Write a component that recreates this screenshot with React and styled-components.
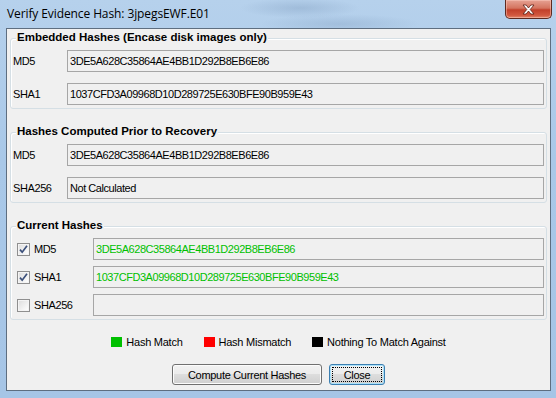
import React from 'react';
import styled, { createGlobalStyle } from 'styled-components';

const GlobalStyle = createGlobalStyle`
  html, body {
    margin: 0;
    padding: 0;
    background: #aecbe8;
  }
  body {
    font-family: "Liberation Sans", Arial, sans-serif;
  }
`;

const GREEN = '#00c000';

const embedded = [
  { label: 'MD5', value: '3DE5A628C35864AE4BB1D292B8EB6E86' },
  { label: 'SHA1', value: '1037CFD3A09968D10D289725E630BFE90B959E43' },
];

const prior = [
  { label: 'MD5', value: '3DE5A628C35864AE4BB1D292B8EB6E86' },
  { label: 'SHA256', value: 'Not Calculated' },
];

const current = [
  { label: 'MD5', value: '3DE5A628C35864AE4BB1D292B8EB6E86', checked: true },
  { label: 'SHA1', value: '1037CFD3A09968D10D289725E630BFE90B959E43', checked: true },
  { label: 'SHA256', value: '', checked: false },
];

const legend = [
  { color: GREEN, text: 'Hash Match' },
  { color: '#ff0000', text: 'Hash Mismatch' },
  { color: '#000000', text: 'Nothing To Match Against' },
];

const CloseGlyph = () => (
  <svg width="13" height="11" viewBox="0 0 13 11">
    <path
      d="M1 1h3.2L6.5 4 8.8 1H12L8.2 5.5 12 10H8.8L6.5 7 4.2 10H1l3.8-4.5z"
      fill="#fff"
      stroke="#5b1d12"
      strokeWidth="0.8"
      strokeLinejoin="round"
    />
  </svg>
);

const CheckBox = ({ checked }) => (
  <Box>
    {checked && (
      <svg width="9" height="9" viewBox="0 0 9 9">
        <path d="M1 4.6l2.2 2.6L8 0.8" fill="none" stroke="#3b4f7a" strokeWidth="1.7" />
      </svg>
    )}
  </Box>
);

const App = () => (
  <>
    <GlobalStyle />
    <Window>
      <TitleBar>
        <Title>Verify Evidence Hash: 3jpegsEWF.E01</Title>
        <CaptionClose>
          <CloseGlyph />
        </CaptionClose>
      </TitleBar>

      <Client>
        <Group $gap={11}>
          <Legend>Embedded Hashes (Encase disk images only)</Legend>
          {embedded.map((h) => (
            <Row key={h.label} $labelWidth={54}>
              <Label>{h.label}</Label>
              <TextBox>{h.value}</TextBox>
            </Row>
          ))}
        </Group>

        <Group $gap={11}>
          <Legend>Hashes Computed Prior to Recovery</Legend>
          {prior.map((h) => (
            <Row key={h.label} $labelWidth={54}>
              <Label>{h.label}</Label>
              <TextBox>{h.value}</TextBox>
            </Row>
          ))}
        </Group>

        <Group $gap={6}>
          <Legend>Current Hashes</Legend>
          {current.map((h) => (
            <Row key={h.label} $labelWidth={80}>
              <CheckLabel>
                <CheckBox checked={h.checked} />
                {h.label}
              </CheckLabel>
              <TextBox $color={GREEN}>{h.value}</TextBox>
            </Row>
          ))}
        </Group>

        <LegendRow>
          {legend.map((l) => (
            <LegendItem key={l.text}>
              <Swatch $color={l.color} />
              {l.text}
            </LegendItem>
          ))}
        </LegendRow>

        <ButtonRow>
          <Button $width={150}>Compute Current Hashes</Button>
          <Button $width={56} $focused>Close</Button>
        </ButtonRow>
      </Client>
    </Window>
  </>
);

export default App;

const Window = styled.div`
  width: 556px;
  height: 398px;
  display: flex;
  flex-direction: column;
  overflow: hidden;
  background:
    radial-gradient(ellipse 60px 10px at 300px 8px, rgba(120, 150, 185, 0.35), transparent),
    radial-gradient(ellipse 80px 10px at 340px 24px, rgba(120, 150, 185, 0.3), transparent),
    linear-gradient(180deg, #b6d1ec 0%, #a9c8e8 40%, #a6c5e6 100%);
`;

const TitleBar = styled.div`
  height: 28px;
  flex: none;
  display: flex;
  align-items: flex-start;
  padding-left: 7px;
`;

const Title = styled.div`
  font-family: "Open Sans", "Noto Sans", sans-serif;
  font-size: 12px;
  letter-spacing: -0.1px;
  line-height: 16px;
  color: #000;
  margin-top: 6px;
`;

const CaptionClose = styled.div`
  margin-left: auto;
  margin-right: 4px;
  width: 47px;
  height: 19px;
  box-sizing: border-box;
  display: flex;
  align-items: center;
  justify-content: center;
  border: 1px solid #5e2a20;
  border-top: none;
  border-radius: 0 0 5px 5px;
  background: linear-gradient(180deg, #e6a293 0%, #d4745f 45%, #c2402a 55%, #d2583f 85%, #e38a6e 100%);
  box-shadow: inset 0 0 0 1px rgba(255, 210, 200, 0.45);
`;

const Client = styled.div`
  margin: 0 5px 0 6px;
  height: 363px;
  flex: none;
  box-sizing: border-box;
  border: 1px solid #5e6e80;
  background: #f0f0f0;
  padding: 9px 3px 0 3px;
  display: flex;
  flex-direction: column;
  gap: 23px;
`;

const Group = styled.div`
  position: relative;
  border: 1px solid #d5dfe5;
  border-radius: 3px;
  box-shadow: inset 1px 1px 0 #fff;
  padding: 11px 2px 3px 2px;
  display: flex;
  flex-direction: column;
  gap: ${(p) => p.$gap}px;
`;

const Legend = styled.div`
  position: absolute;
  top: -8px;
  left: 5px;
  padding: 0 1px;
  background: #f0f0f0;
  font-size: 11.5px;
  font-weight: 700;
  line-height: 13px;
  letter-spacing: 0;
  color: #000;
`;

const Row = styled.div`
  display: grid;
  grid-template-columns: ${(p) => p.$labelWidth}px 1fr;
  align-items: center;
`;

const Label = styled.div`
  font-size: 11px;
  letter-spacing: -0.4px;
  color: #000;
`;

const CheckLabel = styled.div`
  display: flex;
  align-items: center;
  gap: 4px;
  padding-left: 4px;
  font-size: 11px;
  letter-spacing: -0.4px;
  color: #000;
`;

const Box = styled.span`
  width: 13px;
  height: 13px;
  box-sizing: border-box;
  border: 1px solid #8f8f8f;
  background: linear-gradient(135deg, #dcdcdc 0%, #f6f6f6 70%, #ffffff 100%);
  box-shadow: inset 0 0 0 1px #f4f4f4;
  display: flex;
  align-items: center;
  justify-content: center;
`;

const TextBox = styled.div`
  height: 22px;
  box-sizing: border-box;
  border: 1px solid #a6a6a6;
  background: #f0f0f0;
  padding-left: 2px;
  display: flex;
  align-items: center;
  font-size: 11px;
  letter-spacing: -0.45px;
  white-space: nowrap;
  overflow: hidden;
  color: ${(p) => p.$color || '#000'};
`;

const LegendRow = styled.div`
  margin-top: -8px;
  height: 13px;
  display: flex;
  justify-content: center;
  align-items: center;
  gap: 21px;
`;

const LegendItem = styled.div`
  display: flex;
  align-items: center;
  gap: 4px;
  font-size: 11px;
  letter-spacing: -0.25px;
  color: #000;
`;

const Swatch = styled.span`
  width: 11px;
  height: 10px;
  background: ${(p) => p.$color};
`;

const ButtonRow = styled.div`
  margin-top: -7px;
  display: flex;
  justify-content: center;
  gap: 7px;
`;

const Button = styled.button.attrs({ type: 'button' })`
  position: relative;
  width: ${(p) => p.$width}px;
  height: 21px;
  padding: 0;
  font-family: "Liberation Sans", Arial, sans-serif;
  font-size: 11px;
  letter-spacing: -0.3px;
  color: #000;
  border: 1px solid ${(p) => (p.$focused ? '#3c7fb1' : '#707070')};
  border-radius: 3px;
  background: linear-gradient(180deg, #f2f2f2 0%, #ebebeb 49%, #dddddd 50%, #cfcfcf 100%);
  box-shadow: inset 0 0 0 1px ${(p) => (p.$focused ? '#a9e2fb' : '#fcfcfc')};

  &::after {
    content: '';
    display: ${(p) => (p.$focused ? 'block' : 'none')};
    position: absolute;
    inset: 2px;
    border: 1px dotted #000;
  }
`;
